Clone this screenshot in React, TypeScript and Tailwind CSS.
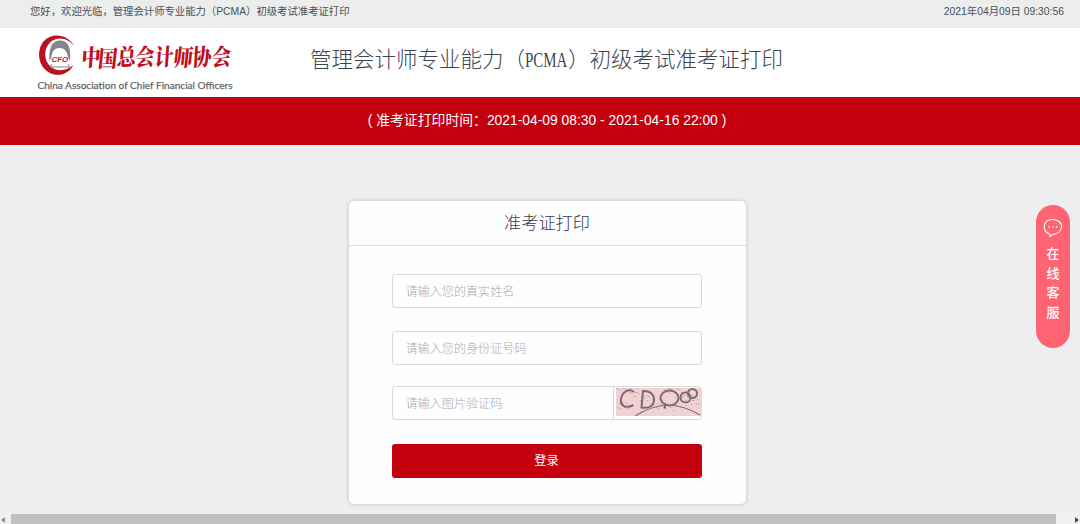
const sans = "font-['Liberation_Sans','Noto_Sans_CJK_SC',sans-serif]"

function Logo() {
  return (
    <svg width="200" height="60" viewBox="36 33 200 60" className="block overflow-visible">
      {/* 圆环 */}
      <path d="M74 46 C68 34 52 32 43.500 41.500 C35 52 39 70 53 74.300 C62 76.500 70 72 73.500 65 C66 71 58 72 51 67 C43 60 43.500 48 51 41.500 C59 36 68 38.500 74 46Z" fill="#b8141f" />
      {/* 人形 */}
      <path d="M49.500 61 C48.500 45 54 40.500 60 40.500 C66 40.500 72 45 69.800 61 L68 57 C67 51 64 48 59.500 48 C55 48 52 51 51.500 57Z" fill="#85858c" />
      <path d="M51.500 64 L50 67 H69.500 L68 64" fill="none" stroke="#85858c" strokeWidth="1" />
      <text x="51.500" y="62" fontSize="7" fontWeight="bold" fontStyle="italic" textLength="16.500" lengthAdjust="spacingAndGlyphs" fontFamily="Liberation Sans" fill="#c3202a">CFO</text>
      <text transform="translate(81 66.500) skewX(-6) scale(1 1.220)" x="0 16.500 35.500 54 73 92 111 130.500" y="0 0.500 -0.500 -0.500 -0.500 -0.500 -0.500 -0.500" rotate="-3 0 -3 -4 -3 0 -3 -4" fontSize="19" fontWeight="900" fontFamily="'Noto Serif CJK SC','Noto Sans CJK SC',sans-serif" fill="#bd101c">中国总会计师协会</text>
      <text x="37.500" y="89" fontSize="10" textLength="195" lengthAdjust="spacingAndGlyphs" fontFamily="Lato,sans-serif" fill="#66666c" stroke="#66666c" strokeWidth="0.25">China Association of Chief Financial Officers</text>
    </svg>
  )
}

// 图片验证码
function Captcha() {
  const dots = Array.from({ length: 75 }, (_, i) => ({ x: (i * 37 + (i % 5) * 3) % 84, y: (i * 17 + (i % 7) * 2) % 23 }))
  return (
    <svg width="85" height="28" viewBox="0 0 85 28" className="block">
      <rect width="85" height="28" fill="#f0d2d5" />
      {dots.map((d, i) => (
        <rect key={i} x={d.x} y={d.y} width="1.200" height="1" fill="#94777e" opacity="0.6" />
      ))}
      <g fill="none" stroke="#806b72" strokeWidth="2">
        <path d="M18 4 C13 0 6 4 5 11 C4 18 10 21 17.500 17" />
        <path d="M27 3 L25.500 19.500 C34 21 38.500 17 38 10.500 C37 4 32 2.500 26 3" />
        <ellipse cx="53.500" cy="10" rx="9" ry="7.500" />
        <path d="M49 15 V20.500" />
        <circle cx="69.500" cy="9.500" r="5" />
        <circle cx="76.500" cy="5.500" r="4.500" />
        <path d="M19 28 Q51 7 84 27" strokeWidth="1.200" />
      </g>
    </svg>
  )
}

export default function App() {
  const fields = [
    { placeholder: "请输入您的真实姓名", className: "mb-[23px]" },
    { placeholder: "请输入您的身份证号码", className: "mb-[21px]" },
  ]

  return (
    <div className={`relative flex h-[524px] w-[1080px] flex-col overflow-hidden bg-[#eeedef] ${sans}`}>
      {/* 顶部栏 */}
      <div className="flex h-7 shrink-0 justify-between bg-[#eceded] pr-4 pl-[30px] text-[10.350px] leading-[23px] text-[#48505c]">
        <span>您好，欢迎光临，管理会计师专业能力（PCMA）初级考试准考证打印</span>
        <span>2021年04月09日 09:30:56</span>
      </div>

      {/* 标题 */}
      <header className="flex h-[69px] shrink-0 bg-white pt-[5px] pl-9">
        <Logo />
        <h1 className="ml-[74px] flex h-[54px] items-center text-[21.500px] font-light whitespace-nowrap text-[#3c4650]">
          <span>管理会计师专业能力（</span>
          <span className="w-[43px]">
            <span className="inline-block origin-left scale-x-[0.68] font-['Liberation_Serif',serif] text-[22px]">PCMA</span>
          </span>
          <span>）初级考试准考证打印</span>
        </h1>
      </header>

      <div className="flex h-12 shrink-0 justify-center bg-[#c4000f] pl-[14px] text-[13.850px] leading-[47px] whitespace-pre text-white">
        ( 准考证打印时间：2021-04-09 08:30 - 2021-04-16 22:00 )
      </div>

      {/* 登录框 */}
      <main className="flex flex-1 justify-center pt-14 pl-[14px]">
        <div className="h-[303px] w-[397px] rounded-[5px] bg-[#fefefe] shadow-[0_0_4px_rgba(0,0,0,0.2)]">
          <h2 className="flex h-[45px] items-center justify-center border-b border-[#dcdcdf] pt-px text-[17.200px] font-light text-[#35404a]">准考证打印</h2>
          <form className="px-[43px] pt-[28px]">
            {fields.map((field) => (
              <input
                key={field.placeholder}
                placeholder={field.placeholder}
                className={`block h-[34px] w-[310px] rounded-[3px] border border-[#d9d9dd] px-[13px] pt-0.5 text-[12.100px] font-light outline-none placeholder:text-[#a9abb2] ${field.className}`}
              />
            ))}
            <div className="flex h-[34px] w-[310px] rounded-[3px] border border-[#d9d9dd]">
              <input placeholder="请输入图片验证码" className="w-[222px] border-r border-[#d9d9dd] px-[13px] pt-0.5 text-[12.100px] font-light outline-none placeholder:text-[#a9abb2]" />
              <div className="pt-px pl-[2px]">
                <Captcha />
              </div>
            </div>
            <button type="button" className="mt-6 block h-[34px] w-[310px] rounded-[3px] bg-[#c4000f] text-[12.300px] text-white">登录</button>
          </form>
        </div>
      </main>

      {/* 在线客服 */}
      <div className="absolute top-[205px] left-[1036px] flex h-[143px] w-[34px] flex-col items-center rounded-full bg-[#ff6472] pt-[13px] text-[13px] leading-[19.500px] font-medium text-white">
        <svg width="20" height="20" viewBox="0 0 20 20" fill="none" stroke="white" strokeWidth="1.100" className="mb-[6px] shrink-0">
          <path d="M7 16.200 C-1 13.500 -.5 3 7.500 1.700 C14 .6 19 4.500 18.500 9.200 C18 13.500 14 16 10 16.400 L7 18.500Z" strokeLinejoin="round" />
          <path d="M5.500 9h1.500M9.200 9h1.500M13 9h1.500" strokeWidth="1.500" />
        </svg>
        <span>在</span>
        <span>线</span>
        <span>客</span>
        <span>服</span>
      </div>

      {/* 横向滚动条 */}
      <div className="flex h-[10px] shrink-0 items-center justify-between bg-[#f0f0f1]">
        <svg width="11" height="10" viewBox="0 0 11 10">
          <path d="M5 3v6L1 6Z" fill="#929296" />
        </svg>
        <div className="h-full w-[1045px] bg-[#c1bfc1]" />
        <svg width="24" height="10" viewBox="0 0 24 10">
          <path d="M19 3v6l4-3Z" fill="#4d4d50" />
        </svg>
      </div>
    </div>
  )
}
